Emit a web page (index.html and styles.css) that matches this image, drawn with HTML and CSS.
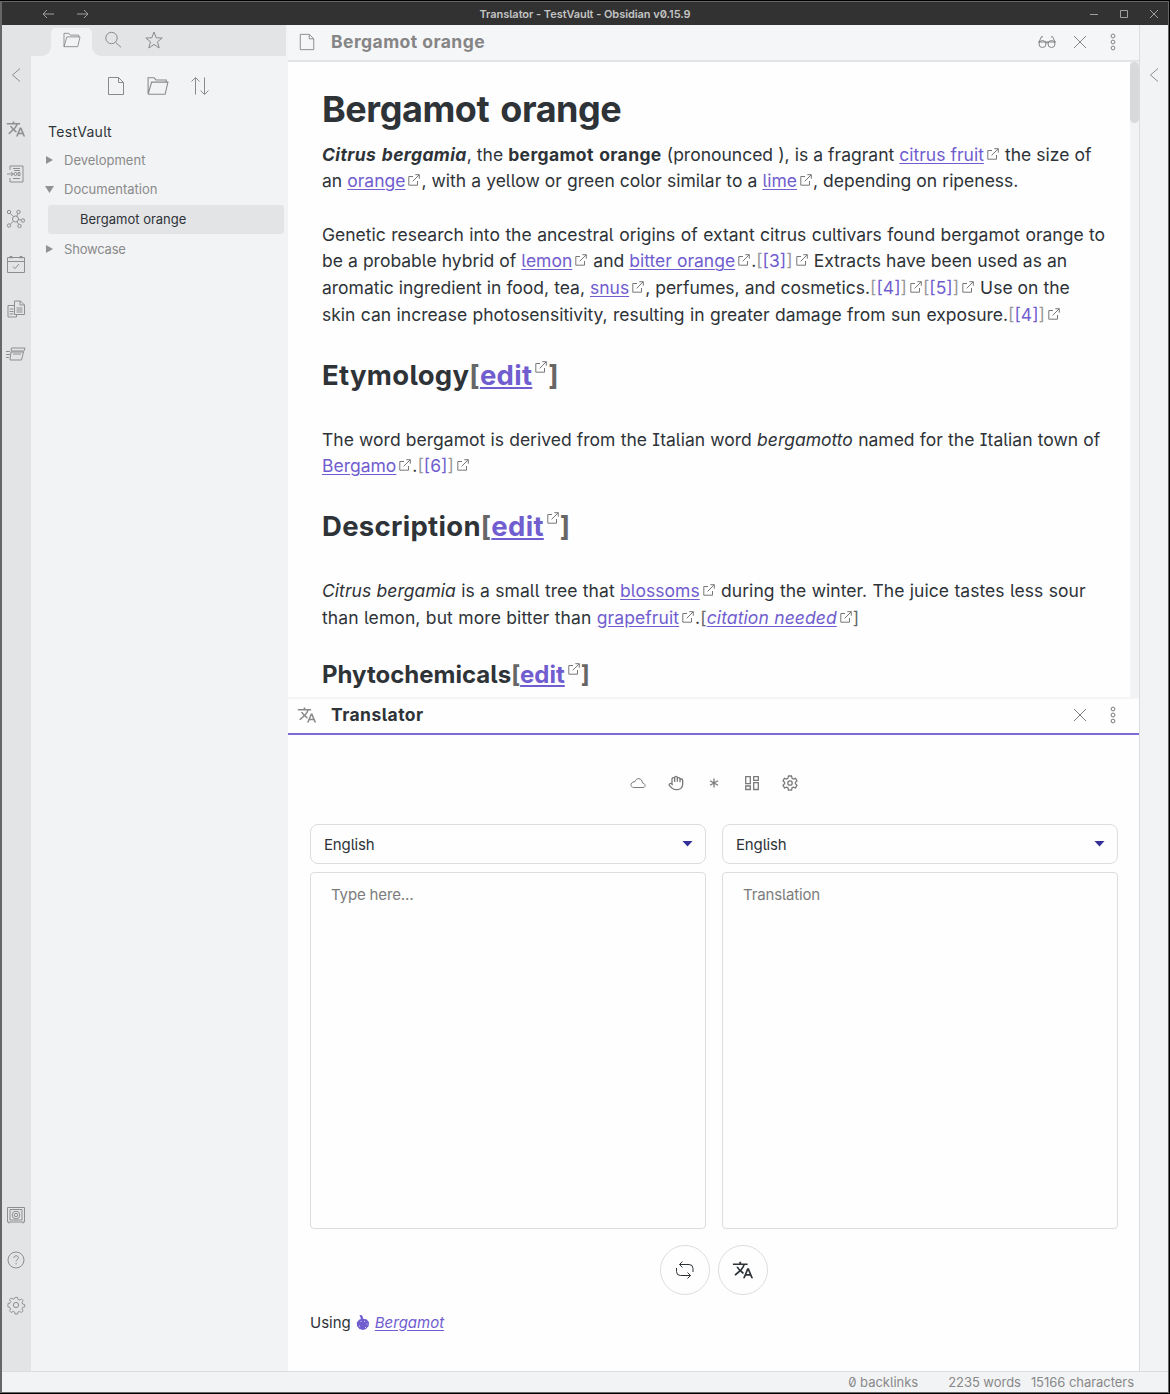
FILE: index.html
```html
<!DOCTYPE html>
<html lang="en">
<head>
<meta charset="utf-8">
<title>Translator - TestVault - Obsidian v0.15.9</title>
<link rel="stylesheet" href="styles.css">
</head>
<body>
<svg class="defs" width="0" height="0">
  <symbol id="translate" viewBox="0 -1.5 24 27" preserveAspectRatio="none"><path fill="currentColor" d="M12.87 15.07l-2.54-2.51.03-.03A17.5 17.5 0 0 0 14.07 6H17V4h-7V2H8v2H1v2h11.17C11.5 7.92 10.44 9.75 9 11.35 8.07 10.32 7.3 9.19 6.69 8h-2c.73 1.63 1.73 3.17 2.98 4.56l-5.09 5.02L4 19l5-5 3.11 3.11.76-2.04zM18.5 10h-2L12 22h2l1.12-3h4.75L21 22h2l-4.5-12zm-2.62 7l1.62-4.33L19.12 17h-3.24z"/></symbol>
  <symbol id="ext" viewBox="0 0 12 12"><path d="M5 2.5H.8v8.7h8.7V7M7.3.7h4v4M11.2.8L4.6 7.4"/></symbol>
  <symbol id="file" viewBox="0 0 18 20"><path d="M1.5 1.5h10l5 5v12h-15zM11.500 1.500v5h5"/></symbol>
  <symbol id="folder" viewBox="0 0 20 18"><path d="M1 16.500V1.500h5.500l1.500 2h9.500v2M1 16.500h15.500L19 5.500H4.200L1 16.500"/></symbol>
  <symbol id="cross" viewBox="0 0 14 14"><path d="M1 1l12 12M13 1L1 13"/></symbol>
  <symbol id="dots" viewBox="0 0 6 18"><circle cx="3" cy="3" r="1.900"/><circle cx="3" cy="9" r="1.900"/><circle cx="3" cy="15" r="1.900"/></symbol>
  <symbol id="left" viewBox="0 0 10 16"><path d="M9 1.500L1.500 8 9 14.500"/></symbol>
</svg>
<div class="window">
  <header class="titlebar">
    <div class="nav">
      <svg width="12" height="10"><path d="M12 5H1M5 1L1 5l4 4"/></svg>
      <svg width="12" height="10"><path d="M0 5h11M7 1l4 4-4 4"/></svg>
    </div>
    <div class="title">Translator - TestVault - Obsidian v0.15.9</div>
    <div class="controls">
      <svg width="10" height="10"><path d="M1 5.500h8"/></svg>
      <svg width="10" height="10"><path d="M1.500 1.500h7v7h-7z"/></svg>
      <svg width="10" height="10"><path d="M1 1l8 8M9 1L1 9"/></svg>
    </div>
  </header>
  <div class="workspace">
    <nav class="ribbon">
      <svg class="collapse" width="10" height="16"><use href="#left"/></svg>
      <div class="actions">
        <svg width="20" height="20"><use href="#translate"/></svg>
        <svg width="20" height="20"><path d="M4 6V2h13v16H4v-4M7 4.500h7M8 6.500h6M7 14.500h7M1 10h6M5 8l2.500 2L5 12"/><circle cx="9.500" cy="10" r="1.500"/><path d="M12 8.500h2v3h-2z"/></svg>
        <svg width="20" height="20"><circle cx="9.500" cy="10" r="3"/><circle cx="3" cy="3" r="1.700"/><circle cx="12.500" cy="3" r="1.700"/><circle cx="17" cy="11.500" r="1.700"/><circle cx="3" cy="16.500" r="1.700"/><circle cx="13.500" cy="17" r="1.700"/><path d="M4 4.200l3.500 3.500M12 4.700l-1.300 2.500M12.500 10.500l2.800.5M7.400 12.200L4.300 15.300M11 12.700l1.700 2.700"/></svg>
        <svg width="20" height="20"><path d="M1.500 3.500h17v15h-17zM1.500 7.500h17M4 4.500V2.500h2v2M14 4.500V2.500h2v2M7 12.500l2 2.200 4-4.700"/></svg>
        <svg width="20" height="20"><path d="M10.500 15.500v2.500H2V6.500h6M8.500 2h6l4 4v9.500h-10zM14 2v4h4.500M10.500 9h6M10.500 11h6M10.500 13h6M3.500 10h4M3.500 12.500h4M3.500 15h4"/></svg>
        <svg width="20" height="20"><path d="M5.500 4h13.500l-1 3H5zM5 8h12.500l-2 8H4zM0 7.500h4M0 10.500h4M0 13.500h3M7 10h8"/></svg>
      </div>
      <div class="actions bottom">
        <svg width="20" height="20"><path d="M1.500 2.500h17v14.500h-17zM4 4.500h12v10.500H4zM3 17v1.500M17 17v1.500"/><circle cx="10" cy="10" r="3.800"/><circle cx="10" cy="10" r="1.700"/></svg>
        <svg width="20" height="20"><circle cx="10" cy="10" r="8"/><path d="M7.800 8c0-3 4.600-2.800 4.600-.3 0 1.700-2.300 1.800-2.300 3.800M10.100 13v1.400"/></svg>
        <svg width="20" height="20"><path d="M8.700 2h2.600l.5 2.200 1.700.7 2-1.200 1.800 1.800-1.200 2 .7 1.700 2.200.5v2.600l-2.200.5-.7 1.700 1.200 2-1.800 1.800-2-1.200-1.700.7-.5 2.200H8.700l-.5-2.200-1.700-.7-2 1.200-1.800-1.800 1.200-2-.7-1.700-2.200-.5V8.700l2.200-.5.7-1.700-1.200-2 1.800-1.800 2 1.200 1.700-.7z" transform="translate(1 .5) scale(.93)"/><circle cx="10" cy="10" r="2.600"/></svg>
      </div>
    </nav>
    <aside class="sidebar">
      <div class="tabs">
        <div class="tab active"><svg width="18" height="16"><use href="#folder"/></svg></div>
        <div class="tab"><svg width="18" height="18"><circle cx="7.500" cy="7" r="5.700"/><path d="M11.700 11.500L17 16.300"/></svg></div>
        <div class="tab"><svg width="18" height="18"><path d="M9 1l2.200 5.800 6 .2-4.700 3.800L14.200 17 9 13.400 3.800 17l1.700-6.200L.8 7l6-.2z"/></svg></div>
      </div>
      <div class="panel">
        <div class="tools">
          <svg width="18" height="20"><use href="#file"/></svg>
          <svg width="22" height="20"><use href="#folder"/></svg>
          <svg width="20" height="20"><path d="M5.500 18.500V2M1.500 5.500l4-4 4 4M14.500 1.500V18M10.500 14.500l4 4 4-4"/></svg>
        </div>
        <div class="vault">TestVault</div>
        <div class="folder"><i class="arrow"></i>Development</div>
        <div class="folder"><i class="arrow open"></i>Documentation</div>
        <div class="note">Bergamot orange</div>
        <div class="folder last"><i class="arrow"></i>Showcase</div>
      </div>
    </aside>
    <main class="main">
      <section class="leaf reading">
        <div class="view-header">
          <svg class="kind" width="18" height="19"><use href="#file"/></svg>
          <h2 class="view-title">Bergamot orange</h2>
          <svg width="18" height="14"><circle cx="4.500" cy="9" r="3.500"/><circle cx="13.500" cy="9" r="3.500"/><path d="M0 7h18M8 8q1-1 2 0M1 7l2.500-5.500L5 2M17 7l-2.500-5.500L13 2"/></svg>
          <svg width="14" height="14"><use href="#cross"/></svg>
          <svg width="6" height="18"><use href="#dots"/></svg>
        </div>
        <div class="scroller">
          <article class="article">
            <h1>Bergamot orange</h1>
            <p><span class="line a1"><b><em>Citrus bergamia</em></b>, the <b>bergamot orange</b> (pronounced ), is a fragrant <a>citrus fruit</a><svg class="ext"><use href="#ext"/></svg> the size of</span>
            <span class="line a2">an <a>orange</a><svg class="ext"><use href="#ext"/></svg>, with a yellow or green color similar to a <a>lime</a><svg class="ext"><use href="#ext"/></svg>, depending on ripeness.</span></p>
            <p><span class="line a3">Genetic research into the ancestral origins of extant citrus cultivars found bergamot orange to</span>
            <span class="line a4">be a probable hybrid of <a>lemon</a><svg class="ext"><use href="#ext"/></svg> and <a>bitter orange</a><svg class="ext"><use href="#ext"/></svg>.<s>[</s><a class="ref">[3]</a><s>]</s><svg class="ext"><use href="#ext"/></svg> Extracts have been used as an</span>
            <span class="line a5">aromatic ingredient in food, tea, <a>snus</a><svg class="ext"><use href="#ext"/></svg>, perfumes, and cosmetics.<s>[</s><a class="ref">[4]</a><s>]</s><svg class="ext"><use href="#ext"/></svg><s>[</s><a class="ref">[5]</a><s>]</s><svg class="ext"><use href="#ext"/></svg> Use on the</span>
            <span class="line a6">skin can increase photosensitivity, resulting in greater damage from sun exposure.<s>[</s><a class="ref">[4]</a><s>]</s><svg class="ext"><use href="#ext"/></svg></span></p>
            <h2>Etymology<s>[</s><a>edit</a><svg class="ext"><use href="#ext"/></svg><s>]</s></h2>
            <p><span class="line a7">The word bergamot is derived from the Italian word <em>bergamotto</em> named for the Italian town of</span>
            <span class="line a8"><a>Bergamo</a><svg class="ext"><use href="#ext"/></svg>.<s>[</s><a class="ref">[6]</a><s>]</s><svg class="ext"><use href="#ext"/></svg></span></p>
            <h2>Description<s>[</s><a>edit</a><svg class="ext"><use href="#ext"/></svg><s>]</s></h2>
            <p><span class="line a9"><em>Citrus bergamia</em> is a small tree that <a>blossoms</a><svg class="ext"><use href="#ext"/></svg> during the winter. The juice tastes less sour</span>
            <span class="line a10">than lemon, but more bitter than <a>grapefruit</a><svg class="ext"><use href="#ext"/></svg>.<span class="cite">[</span><a><em>citation needed</em></a><svg class="ext"><use href="#ext"/></svg><span class="cite">]</span></span></p>
            <h3>Phytochemicals<s>[</s><a>edit</a><svg class="ext"><use href="#ext"/></svg><s>]</s></h3>
          </article>
          <div class="track"><div class="thumb"></div></div>
        </div>
      </section>
      <section class="leaf translator">
        <div class="view-header">
          <svg class="kind" width="20" height="20"><use href="#translate"/></svg>
          <h2 class="view-title">Translator</h2>
          <svg width="14" height="14"><use href="#cross"/></svg>
          <svg width="6" height="18"><use href="#dots"/></svg>
        </div>
        <div class="view-body">
          <div class="modes">
            <svg width="16" height="16"><path d="M3.500 12.500h9.500c3 0 2.700-4.300-.5-4.500C12 2.500 6 2.500 5 6.500 0 7-.3 12 3.500 12.500z"/></svg>
            <svg width="16" height="16" viewBox="0 0 24 24" class="bold"><path d="M18 11V6a2 2 0 0 0-4 0M14 10V4a2 2 0 0 0-4 0v2M10 10.500V6a2 2 0 0 0-4 0v8M18 8a2 2 0 1 1 4 0v6a8 8 0 0 1-8 8h-2c-2.800 0-4.500-.86-6-2.340l-3.600-3.600a2 2 0 0 1 2.830-2.820L7 15"/></svg>
            <svg width="16" height="16" class="thick"><path d="M8 3.500v9M4 5.700l8 4.600M12 5.700l-8 4.600"/></svg>
            <svg width="16" height="16" class="thick"><path d="M1.700 1.700h4.600v7H1.700zM9.700 1.700h4.600v3.600H9.700zM9.700 7.700h4.600v6.800H9.700zM1.700 11h4.600v3.500H1.700z"/></svg>
            <svg width="16" height="16" class="thick"><path d="M6.500 1h3l.5 2.200 1.300.8 2.200-.7L15 5.900l-1.600 1.500v1.400L15 10.300l-1.500 2.600-2.200-.7-1.300.8-.5 2.200h-3L6 13l-1.300-.8-2.200.7L1 10.300l1.600-1.500V7.400L1 5.900l1.500-2.600 2.200.7L6 3.200z"/><circle cx="8" cy="8" r="2.200"/></svg>
          </div>
          <div class="panes">
            <div class="select">English<i></i></div>
            <div class="select">English<i></i></div>
            <div class="textarea">Type here…</div>
            <div class="textarea">Translation</div>
          </div>
          <div class="buttons">
            <div class="round"><svg width="20" height="20"><path d="M7.500 1.500L4.500 4.500l3 3M4.500 4.500H14q4 0 4 4V12M12.500 12.500l3 3-3 3M15.500 15.500H5.500q-4 0-4-4V8"/></svg></div>
            <div class="round"><svg width="22" height="22"><use href="#translate"/></svg></div>
          </div>
          <div class="using">Using <svg width="14" height="17" viewBox="0 0 14 17"><path fill="currentColor" d="M3.500 1l2.500.3L7.500 5l3 .3 2.500 3-.3 3.700-2.700 3-3 1-3.500-1L1 12 .8 8.500 3 5.800l2-.8z"/><path class="spark" d="M4.500 7.500h1M8 7.500h1M10.500 10h1M9 13.500h1M3 12h1"/></svg> <a><em>Bergamot</em></a></div>
        </div>
      </section>
    </main>
    <nav class="ribbon right"><svg class="collapse" width="10" height="16"><use href="#left"/></svg></nav>
  </div>
  <footer class="status"><span class="back">0 backlinks</span><span class="words">2235 words</span><span class="chars">15166 characters</span></footer>
</div>
</body>
</html>
```

FILE: styles.css
```css
* { box-sizing: border-box; }
body {
  margin: 0;
  width: 1170px;
  height: 1394px;
  background: #000;
  color: #2e3338;
  font-family: Inter, "Noto Sans", sans-serif;
  font-feature-settings: "zero", "cv05", "cv08";
  overflow: hidden;
}
svg { display: block; flex: none; fill: none; stroke: currentColor; stroke-width: 1; }
#translate path { stroke: none; }
.defs { position: absolute; }
h1, h2, h3, p { margin: 0; }

.window {
  display: flex;
  flex-direction: column;
  height: 1392px;
  width: 1169px;
  margin-top: 1px;
  border: solid #666;
  border-width: 1px 1px 1px 2px;
  background: #f2f3f5;
}
.titlebar {
  display: grid;
  grid-template-columns: 1fr auto 1fr;
  align-items: center;
  height: 23px;
  flex: none;
  background: #323232;
  color: #a0a0a0;
}
.nav { display: flex; gap: 23px; padding-left: 40px; }
.title { font-size: 11px; font-weight: 600; letter-spacing: -.05px; color: #c4c4c4; }
.controls { display: flex; justify-content: flex-end; gap: 20px; padding-right: 9px; }

.workspace { display: flex; flex: 1; min-height: 0; }
.ribbon {
  display: flex;
  flex-direction: column;
  align-items: center;
  width: 29px;
  padding-right: 1px;
  background: #e3e4e6;
  color: #8e8e8e;
}
.ribbon.right { padding-right: 0; border-left: 1px solid #dcdddf; background: #f2f3f5; }
.collapse { margin-top: 42px; }
.actions { display: flex; flex-direction: column; gap: 25px; margin-top: 36px; }
.actions.bottom { margin-top: auto; margin-bottom: 56px; }

.sidebar { width: 257px; background: #f2f3f5; color: #8a8a8a; }
.tabs { display: flex; width: 255px; height: 31px; padding: 3px 0 0 20px; background: #e3e4e6; }
.tab { display: flex; justify-content: center; align-items: center; width: 41px; padding-bottom: 4px; }
.tab.active { position: relative; background: #f2f3f5; border-radius: 5px 5px 0 0; }
.tab.active::before, .tab.active::after {
  content: "";
  position: absolute;
  bottom: 0;
  width: 9px;
  height: 9px;
}
.tab.active::before { right: 100%; background: radial-gradient(circle at 0 0, #e3e4e6 8.5px, #f2f3f5 9px); }
.tab.active::after { left: 100%; background: radial-gradient(circle at 100% 0, #e3e4e6 8.5px, #f2f3f5 9px); }
.panel { padding: 20px 4px 0 17px; font-size: 13px; }
.tools { display: flex; justify-content: center; gap: 21.5px; padding-right: 15px; }
.vault { margin-top: 27px; height: 22px; line-height: 17px; font-size: 14px; letter-spacing: .3px; color: #2e3338; }
.folder { display: flex; align-items: center; height: 29px; padding-top: 1px; }
.folder.last { padding: 0 0 1px; letter-spacing: -.2px; }
.arrow { width: 16px; height: 8px; background: linear-gradient(#929292, #929292) left / 7px 8px no-repeat; clip-path: polygon(0 0, 7px 50%, 0 100%); margin-left: -2px; margin-right: 2px; }
.arrow.open { clip-path: polygon(0 1px, 9px 1px, 4.5px 8px); background-size: 9px 8px; margin-left: -3px; margin-right: 3px; }
.note { margin: 2px 0 1px; padding-left: 32px; height: 29px; line-height: 29px; border-radius: 3px; background: #e3e4e6; color: #2e3338; }

.main { width: 851px; background: #fefefe; display: flex; flex-direction: column; }
.leaf { display: flex; flex-direction: column; }
.view-header { display: flex; align-items: center; height: 36px; padding: 0 23px 0 10px; flex: none; color: #7c7c7c; }
.view-header .kind { margin-right: 15px; }
.view-title { flex: 1; font-size: 17.5px; font-weight: 700; letter-spacing: .45px; }
.view-header svg:nth-last-child(2) { margin: 0 23px 0 17px; }
.reading { height: 674px; border-bottom: 2px solid #f4f5f7; }
.reading .view-header { height: 37px; padding-bottom: 2px; background: #f5f6f8; border-bottom: 2px solid #e3e4e6; color: #858585; }
.reading .kind { height: 18px; margin-left: 0; }
.scroller { display: flex; flex: 1; min-height: 0; }
.article { flex: 1; min-width: 0; padding: 16px 0 0 34px; overflow: hidden; font-size: 17.5px; line-height: 26.7px; }
.article h1 { height: 63.6px; line-height: 62px; font-size: 36px; letter-spacing: -.45px; word-spacing: 3px; }
.article h2 { height: 98.1px; padding-top: 28px; line-height: 36px; font-size: 27.5px; letter-spacing: .3px; }
.article h3 { padding-top: 25px; line-height: 36px; font-size: 24px; }
.article p + p { margin-top: 26.7px; }
.article .line { display: block; white-space: nowrap; }
.article b { letter-spacing: .38px; word-spacing: 1px; }
.a1, .a2, .a4 { word-spacing: .15px; }
.a3 { word-spacing: .55px; }
.a5 { word-spacing: .1px; }
.a6 { word-spacing: .5px; }
.a7 { word-spacing: .33px; }
.a9 { word-spacing: .35px; letter-spacing: .05px; }
.a10 { word-spacing: .35px; letter-spacing: .09px; }
.article a, .using a { color: #705dcf; text-decoration: underline; text-underline-offset: 2px; }
.article a.ref { text-decoration: none; }
.article s { text-decoration: none; color: #999; }
.article h2 s, .article h3 s { color: #666; }
.cite { color: #666; }
.ext { display: inline-block; width: 12px; height: 12px; margin: 0 1px 0 3px; color: #777; vertical-align: 1px; }
h2 .ext { vertical-align: 12px; }
h3 .ext { vertical-align: 8px; }
.track { width: 9px; background: #f2f3f5; }
.thumb { height: 61px; border-radius: 5px; background: #d8d9db; }

.translator { flex: 1; }
.translator .view-header { padding-bottom: 2px; border-bottom: 2px solid #7b6cd9; }
.translator .kind { margin-left: -1px; margin-right: 14px; color: #8a8a8a; }
.translator .view-title { padding-bottom: 1px; color: #2e3338; }
.view-body { padding: 40px 21px 0 22px; }
.modes { display: flex; justify-content: center; gap: 22px; color: #7a7a7a; }
.modes .bold { stroke-width: 2; }
.modes .thick { stroke-width: 1.3; }
.panes { display: grid; grid-template-columns: 396px 396px; grid-template-rows: 40px 357px; gap: 8px 16px; margin-top: 33px; font-size: 15px; letter-spacing: -.15px; }
.select { display: flex; align-items: center; justify-content: space-between; padding: 0 12px 0 13px; border: 1px solid #dcddde; border-radius: 8px; }
.select i { width: 11px; height: 6px; background: #34309a; clip-path: polygon(0 0, 100% 0, 50% 100%); margin-top: -1px; }
.textarea { padding: 12px 20px; line-height: 20px; border: 1px solid #dcddde; border-radius: 4px; color: #7c7c7c; }
.buttons { display: flex; justify-content: center; gap: 8px; margin-top: 16px; }
.round { display: flex; align-items: center; justify-content: center; width: 50px; height: 50px; border: 1px solid #dcddde; border-radius: 50%; }
.using { display: flex; align-items: center; gap: 5px; margin-top: 16px; height: 22px; font-size: 15px; }
.using svg { color: #705dcf; stroke: none; }
.using .spark { stroke: #d6cff5; }

.status { display: flex; justify-content: flex-end; height: 21px; padding-right: 34px; border-top: 1px solid #dcddde; font-size: 13px; letter-spacing: -.04px; line-height: 21px; color: #888; flex: none; }
.back { margin-right: 30px; }
.words { margin-right: 10px; }
```
